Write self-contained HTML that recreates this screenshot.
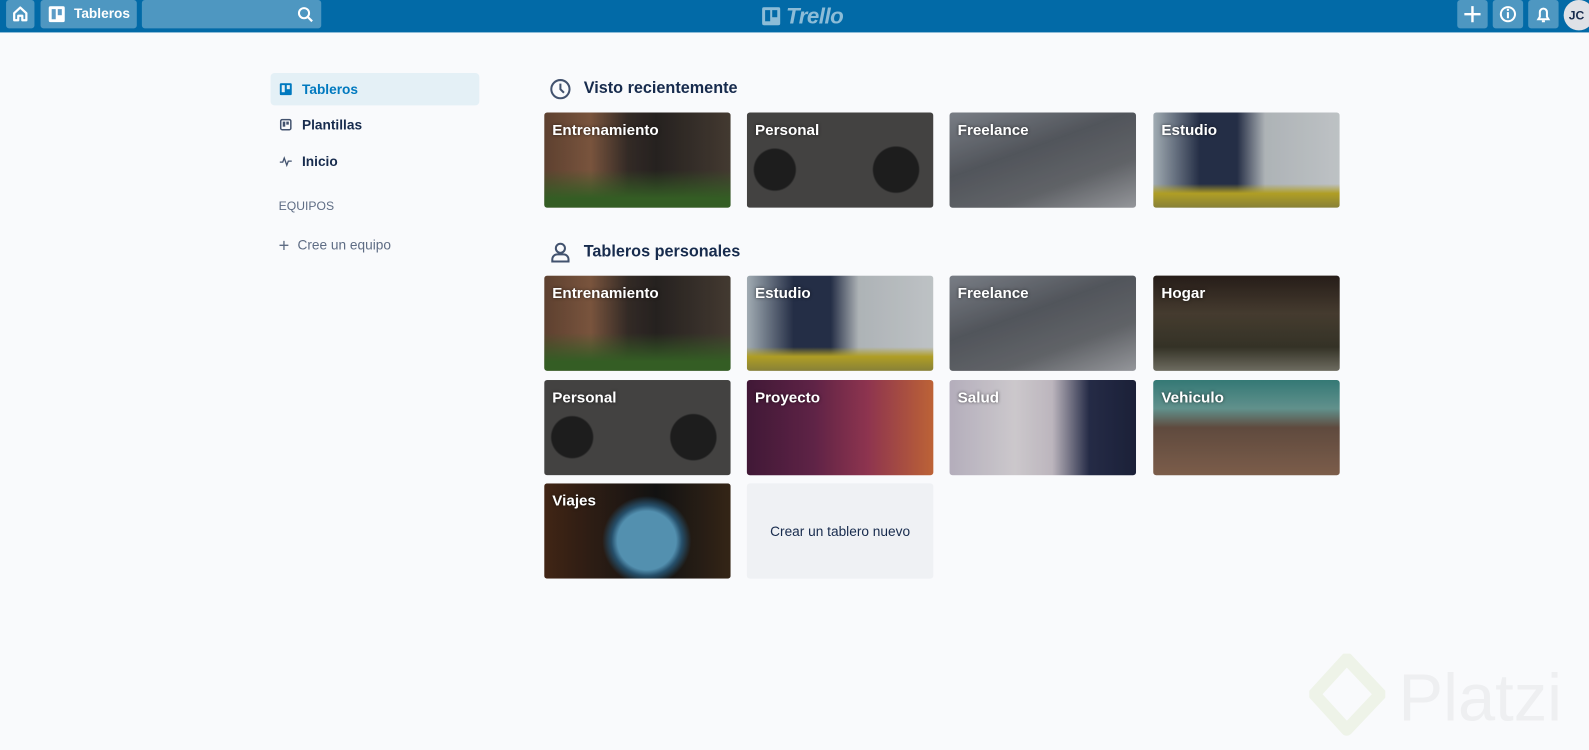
<!DOCTYPE html>
<html><head><meta charset="utf-8"><style>
*{box-sizing:border-box;margin:0;padding:0}
html,body{width:1589px;height:750px;overflow:hidden;background:#f9fafc}
#w{width:1568px;height:740px;transform:scale(1.01339);transform-origin:0 0;background:#f9fafc;font-family:"Liberation Sans",sans-serif;position:relative;overflow:hidden;color:#172b4d}
.hdr{position:absolute;left:0;top:0;width:1568px;height:32px;background:#026aa7}
.hb{position:absolute;top:0;height:28px;background:rgba(255,255,255,.3);border-radius:3px;color:#fff}
.logo{position:absolute;left:752px;top:3px;color:rgba(255,255,255,.55);font:italic bold 22px "Liberation Sans",sans-serif;letter-spacing:-.5px}
.side a{position:absolute;left:267px;width:206px;height:32px;display:flex;align-items:center;padding-left:31px;font-size:13.5px;font-weight:bold;color:#172b4d}
.side .act{background:#e4f0f6;border-radius:4px;color:#0079bf}
.ic{position:absolute;left:9px;top:10px;width:12px;height:12px}
h2{position:absolute;left:576px;font-size:16px;font-weight:bold;color:#172b4d}
.t{position:absolute;width:184px;height:94px;border-radius:3px;overflow:hidden;color:#fff;font-weight:bold;font-size:15px;padding:9px 8px;text-shadow:0 0 3px rgba(0,0,0,.6)}
.t::after{content:"";position:absolute;inset:0;background:rgba(0,0,0,.12)}
.t span{position:relative;z-index:1}
.ent{background:linear-gradient(180deg,rgba(0,0,0,0) 60%,#3c6a2a 90%),linear-gradient(90deg,#6b4a37 0%,#8a6046 25%,#3a302b 45%,#2b2624 60%,#4d4238 100%)}
.per{background:radial-gradient(circle at 80% 60%,#222 0 14%,transparent 15%),radial-gradient(circle at 15% 60%,#222 0 12%,transparent 13%),#4d4c4b}
.fre{background:linear-gradient(160deg,#8a8f98 0%,#5d6168 40%,#6e7176 70%,#a9abb0 100%)}
.est{background:linear-gradient(180deg,transparent 75%,#c8b42a 85%,#9b9340 100%),linear-gradient(90deg,#b8c4cc 0%,#2a3550 25%,#2a3550 45%,#c6ccd0 60%,#d8dde0 100%)}
.hog{background:linear-gradient(180deg,#2c211c 0%,#4f4436 40%,#3c3a2c 75%,#7d7b6e 100%)}
.pro{background:linear-gradient(90deg,#4a1c3e 0%,#6b2850 35%,#a23c5a 65%,#d7713e 100%)}
.sal{background:linear-gradient(90deg,#cdc6d6 0%,#e8e4e8 35%,#d7cfd8 55%,#2a3150 75%,#1f2540 100%)}
.veh{background:linear-gradient(180deg,#3c8a86 0%,#6fa5a0 30%,#6d5547 50%,#8d6a55 100%)}
.via{background:radial-gradient(circle at 55% 60%,#5fa4c8 0 25%,#2c5b7a 30%,transparent 38%),linear-gradient(90deg,#4a2a18,#151515 60%,#3c2a1a)}
.new{position:absolute;left:737px;top:477px;width:184px;height:94px;background:#eff1f4;border-radius:3px;font-size:13.5px;color:#172b4d;display:flex;align-items:center;justify-content:center}
</style></head><body><div id="w">
<div class="hdr">
 <div class="hb" style="left:6px;width:28px"><svg width="28" height="28" viewBox="0 0 28 28"><path d="M8 13 L14 7.5 L20 13 V20 H16 V15.5 H12 V20 H8 Z" fill="none" stroke="#fff" stroke-width="2.2" stroke-linejoin="round"/></svg></div>
 <div class="hb" style="left:40px;width:95px"><svg style="position:absolute;left:8px;top:6px" width="16" height="16"><rect x="0" y="0" width="16" height="16" rx="2" fill="#fff"/><rect x="3" y="3" width="4" height="10" fill="#5b9bc6"/><rect x="9" y="3" width="4" height="6" fill="#5b9bc6"/></svg><span style="position:absolute;left:33px;top:6px;font-weight:bold;font-size:13.5px">Tableros</span></div>
 <div class="hb" style="left:140px;width:177px"><svg style="position:absolute;right:8px;top:6px" width="16" height="16"><circle cx="7" cy="7" r="5" fill="none" stroke="#fff" stroke-width="2"/><path d="M11 11 L15 15" stroke="#fff" stroke-width="2.2"/></svg></div>
 <div class="logo"><svg width="18" height="18" style="vertical-align:-2px"><rect x="0" y="0" width="18" height="18" rx="2" fill="rgba(255,255,255,.55)"/><rect x="3" y="3" width="5" height="11" fill="#026aa7"/><rect x="10" y="3" width="5" height="7" fill="#026aa7"/></svg> Trello</div>
 <div class="hb" style="left:1438px;width:30px"><svg width="30" height="28"><path d="M15 6V22M7 14H23" stroke="#fff" stroke-width="2.4"/></svg></div>
 <div class="hb" style="left:1473px;width:30px"><svg width="30" height="28"><circle cx="15" cy="14" r="7" fill="none" stroke="#fff" stroke-width="2"/><path d="M15 12V18" stroke="#fff" stroke-width="2"/><circle cx="15" cy="9.7" r="1.2" fill="#fff"/></svg></div>
 <div class="hb" style="left:1508px;width:30px"><svg width="30" height="28"><path d="M10 19H20L18.5 16.5V12a3.5 3.5 0 0 0-7 0v4.5Z" fill="none" stroke="#fff" stroke-width="2"/><path d="M13.5 21h3" stroke="#fff" stroke-width="2"/></svg></div>
 <div style="position:absolute;left:1543px;top:0;width:30px;height:30px;border-radius:50%;background:#dfe1e6;color:#172b4d;font-weight:bold;font-size:12px;line-height:30px;padding-left:5px">JC</div>
</div>
<div class="side">
 <a class="act" style="top:72px"><svg class="ic" viewBox="0 0 12 12"><rect width="12" height="12" rx="1.5" fill="#0079bf"/><rect x="2" y="2" width="3" height="7" fill="#e4f0f6"/><rect x="7" y="2" width="3" height="4" fill="#e4f0f6"/></svg>Tableros</a>
 <a style="top:107px"><svg class="ic" viewBox="0 0 12 12"><rect x="1" y="1" width="10" height="10" rx="1.5" fill="none" stroke="#42526e" stroke-width="1.5"/><rect x="3" y="3" width="2.5" height="5" fill="#42526e"/><rect x="6.5" y="3" width="2.5" height="3" fill="#42526e"/></svg>Plantillas</a>
 <a style="top:143px"><svg class="ic" viewBox="0 0 12 12"><path d="M0 7H3L4.5 3L7 10L8.5 6H12" fill="none" stroke="#42526e" stroke-width="1.3"/></svg>Inicio</a>
 <div style="position:absolute;left:275px;top:196px;font-size:12px;color:#5e6c84">EQUIPOS</div>
 <div style="position:absolute;left:275px;top:232px;font-size:13.5px;color:#5e6c84"><span style="font-size:18px;vertical-align:-2px;margin-right:8px">+</span>Cree un equipo</div>
</div>
<svg style="position:absolute;left:542px;top:77px" width="22" height="22"><circle cx="11" cy="11" r="9" fill="none" stroke="#42526e" stroke-width="2"/><path d="M11 5.5V11L14.5 14.5" fill="none" stroke="#42526e" stroke-width="2"/></svg>
<h2 style="top:79px">Visto recientemente</h2>
<svg style="position:absolute;left:542px;top:238px" width="22" height="22"><circle cx="11" cy="7" r="4.5" fill="none" stroke="#42526e" stroke-width="2"/><path d="M3 20V18a5 5 0 0 1 5-5h6a5 5 0 0 1 5 5v2Z" fill="none" stroke="#42526e" stroke-width="2"/></svg>
<h2 style="top:240px">Tableros personales</h2>
<div class="t ent" style="left:537px;top:111px"><span>Entrenamiento</span></div>
<div class="t per" style="left:737px;top:111px"><span>Personal</span></div>
<div class="t fre" style="left:937px;top:111px"><span>Freelance</span></div>
<div class="t est" style="left:1138px;top:111px"><span>Estudio</span></div>
<div class="t ent" style="left:537px;top:272px"><span>Entrenamiento</span></div>
<div class="t est" style="left:737px;top:272px"><span>Estudio</span></div>
<div class="t fre" style="left:937px;top:272px"><span>Freelance</span></div>
<div class="t hog" style="left:1138px;top:272px"><span>Hogar</span></div>
<div class="t per" style="left:537px;top:375px"><span>Personal</span></div>
<div class="t pro" style="left:737px;top:375px"><span>Proyecto</span></div>
<div class="t sal" style="left:937px;top:375px"><span>Salud</span></div>
<div class="t veh" style="left:1138px;top:375px"><span>Vehiculo</span></div>
<div class="t via" style="left:537px;top:477px"><span>Viajes</span></div>
<div class="new">Crear un tablero nuevo</div>
<svg style="position:absolute;left:1292px;top:645px" width="75" height="90"><path d="M37 5 L70 40 L37 75 L5 40 Z" fill="none" stroke="#eef3e8" stroke-width="12" stroke-linejoin="round"/></svg>
<div style="position:absolute;left:1380px;top:650px;font-size:66px;color:#eeeff1">Platzi</div>
</div></body></html>
